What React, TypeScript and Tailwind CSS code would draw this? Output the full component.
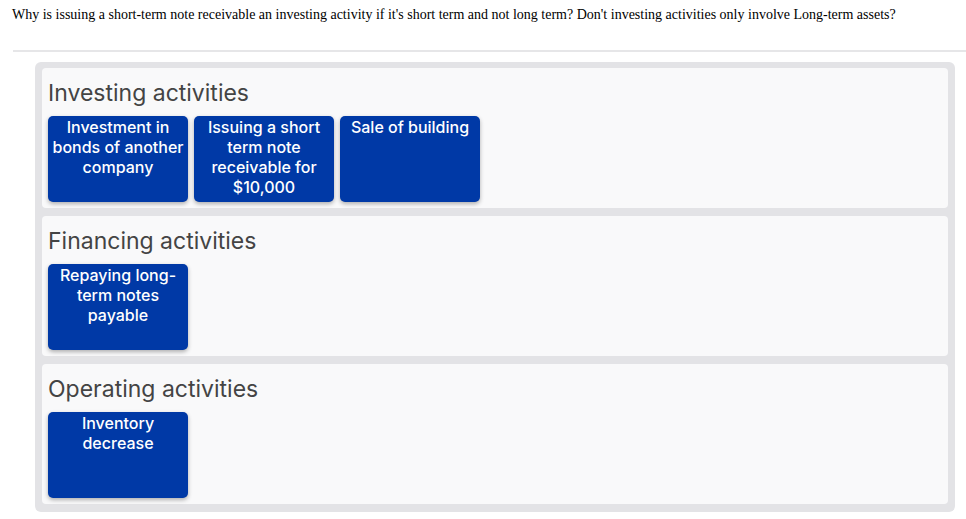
import React from "react";

const sections: { title: string; items: string[] }[] = [
  {
    title: "Investing activities",
    items: [
      "Investment in bonds of another company",
      "Issuing a short term note receivable for $10,000",
      "Sale of building",
    ],
  },
  { title: "Financing activities", items: ["Repaying long-term notes payable"] },
  { title: "Operating activities", items: ["Inventory decrease"] },
];

export default function App() {
  return (
    <div className="w-[966px] h-[519px] bg-white overflow-hidden">
      <p
        className="pl-[12px] pt-[7px] text-[14px] leading-[16px] text-black"
        style={{ fontFamily: '"Liberation Serif", "Times New Roman", serif' }}
      >
        Why is issuing a short-term note receivable an investing activity if it's short term and not long term? Don't investing activities only involve Long-term assets?
      </p>
      <div className="ml-[13px] mt-[27px] h-[2px] bg-[#e6e6e8]" />
      <div
        className="ml-[35px] mt-[10px] w-[920px] rounded-[6px] bg-[#e3e3e6] px-[7px] pt-[6px] pb-[8px] flex flex-col gap-[8px]"
        style={{ fontFamily: 'Inter, "Noto Sans", sans-serif' }}
      >
        {sections.map((s) => (
          <div key={s.title} className="h-[140px] rounded-[4px] bg-[#f9f9fa] px-[6px] pt-[7px]">
            <div className="text-[23px] leading-[36px] text-[#444444]">{s.title}</div>
            <div className="mt-[5px] flex gap-[6px]">
              {s.items.map((it) => (
                <div
                  key={it}
                  className="w-[140px] h-[86px] rounded-[5px] bg-[#0039a6] text-white text-[16px] font-medium leading-[20px] text-center pt-[1px] shadow-[0_2px_4px_rgba(0,0,0,0.3)]"
                >
                  {it}
                </div>
              ))}
            </div>
          </div>
        ))}
      </div>
    </div>
  );
}
